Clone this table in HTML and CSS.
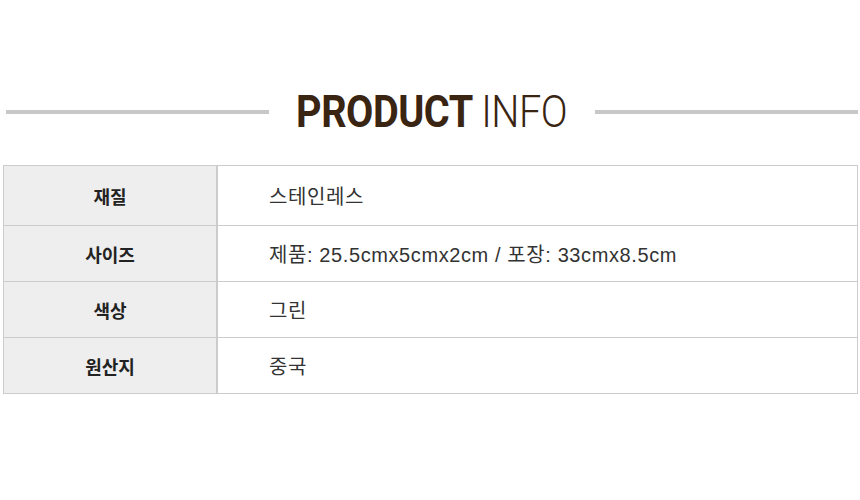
FILE: index.html
```html
<!DOCTYPE html>
<html lang="ko">
<head>
<meta charset="utf-8">
<link rel="stylesheet" href="styles.css">
</head>
<body>
<div class="page">
  <div class="title-row">
    <span class="rule"></span>
    <h2 class="title"><b>PRODUCT</b> <span class="light">INFO</span></h2>
    <span class="rule"></span>
  </div>
  <table class="info">
    <tr class="first"><th>재질</th><td>스테인레스</td></tr>
    <tr><th>사이즈</th><td>제품: 25.5cmx5cmx2cm / 포장: 33cmx8.5cm</td></tr>
    <tr><th>색상</th><td>그린</td></tr>
    <tr><th>원산지</th><td>중국</td></tr>
  </table>
</div>
</body>
</html>
```
FILE: styles.css
```css
html, body { margin: 0; padding: 0; background: #fff; }
.page { width: 860px; padding-top: 89px; }
.title-row { display: flex; align-items: center; gap: 12px; padding: 0 2px 0 6px; height: 46px; }
.rule { flex: 1; height: 4px; background: #c8c8c8; }
.title { margin: 0; font-family: Roboto, "Liberation Sans", sans-serif; font-size: 44px; line-height: 46px; color: #3a2412; white-space: nowrap; transform: scaleX(0.9); letter-spacing: -0.5px; }
.title b { font-weight: 700; }
.title .light { font-weight: 300; }
.info { margin: 30px 0 0 3px; width: 855px; border-collapse: collapse; font-family: "Liberation Sans", "Noto Sans CJK KR", sans-serif; }
.info th, .info td { border: 1px solid #cccccc; height: 55px; padding: 0; }
.info tr.first th, .info tr.first td { height: 59px; }
.info th { width: 212px; background: #eeeeee; font-family: "Noto Sans CJK KR", sans-serif; font-weight: 700; font-size: 18px; color: #222; text-align: center; border-right-width: 2px; }
.info td { padding-left: 51px; font-size: 20px; letter-spacing: 0.6px; color: #333; text-align: left; }
```
